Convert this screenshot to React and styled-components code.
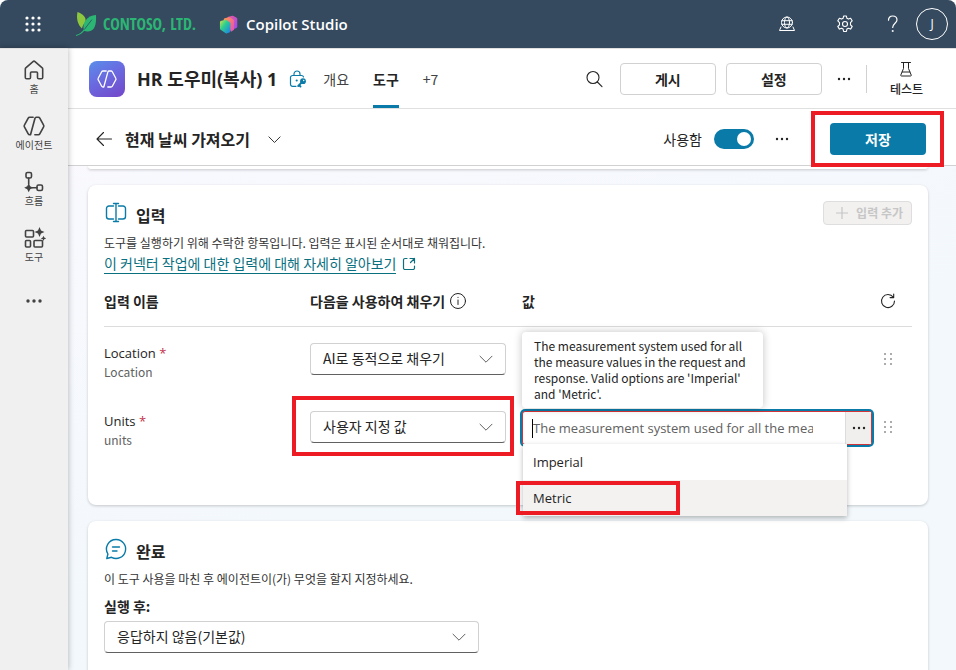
import React from "react";
import styled, { createGlobalStyle, css } from "styled-components";

const sans = '"Open Sans", "Noto Sans CJK KR", sans-serif';

const Global = createGlobalStyle`
  *, *::before, *::after { box-sizing: border-box; }
  html, body, #root { height: 100%; }
  body { margin: 0; background: #fff; color: #242424; font-family: "Noto Sans CJK KR", "Open Sans", sans-serif; font-size: 14px; line-height: 20px; overflow: hidden; }
  button, input, select { font: inherit; color: inherit; }
  h1, h2, p { margin: 0; }
  svg { display: block; flex: none; }
`;

const Shell = styled.div`
  height: 100vh;
  display: flex;
  flex-direction: column;
`;

const TopBar = styled.header`
  height: 48px;
  flex: none;
  display: flex;
  align-items: center;
  background: #354a5f;
  color: #fff;
  border-radius: 8px 8px 0 0;
  padding: 0 8px 0 24px;
`;

const PlainButton = styled.button`
  display: flex;
  align-items: center;
  justify-content: center;
  border: 0;
  background: none;
  padding: 0;
`;

const Brand = styled.a`
  display: flex;
  align-items: center;
  gap: 6px;
  width: 120px;
  margin-left: 33px;
  color: #2bb673;
  text-decoration: none;
  white-space: nowrap;
  font: 700 16px/20px "Open Sans Condensed", "Roboto Condensed", "Liberation Sans Narrow", "Noto Sans CJK KR", sans-serif;
`;

const Product = styled.a`
  display: flex;
  align-items: center;
  gap: 8px;
  margin-left: 24px;
  color: #fff;
  text-decoration: none;
  font: 600 15px/24px ${sans};
`;

const TopActions = styled.div`
  margin-left: auto;
  display: flex;
  align-items: center;
`;

const TopButton = styled(PlainButton)`
  width: ${(p) => p.$width}px;
  height: 48px;
`;

const Avatar = styled(PlainButton)`
  width: 32px;
  height: 32px;
  margin-left: 4px;
  border: 1px solid #fff;
  border-radius: 50%;
  color: #fff;
  font-family: ${sans};
  font-size: 12px;
`;

const Body = styled.div`
  flex: 1;
  min-height: 0;
  display: flex;
`;

const Rail = styled.nav`
  width: 68px;
  flex: none;
  background: #f0f0f0;
  border-top: 1px solid #e0e0e0;
  box-shadow: 0 0 6px rgba(0, 0, 0, 0.3);
  display: flex;
  flex-direction: column;
  align-items: center;
  padding-top: 7px;
  z-index: 1;
`;

const RailLink = styled.a`
  height: 56px;
  display: flex;
  flex-direction: column;
  align-items: center;
  padding-top: 2px;
  color: #424242;
  text-decoration: none;
  font-size: 10px;
  line-height: 14px;
`;

const RailMore = styled(PlainButton)`
  width: 40px;
  height: 42px;
  color: #424242;
`;

const Main = styled.main`
  flex: 1;
  min-width: 0;
  display: flex;
  flex-direction: column;
  background: linear-gradient(160deg, #faf9fe, #f2f8fc 70%);
`;

const AgentBar = styled.div`
  height: 61px;
  flex: none;
  display: flex;
  align-items: center;
  background: #fff;
  border-top: 1px solid #e0e0e0;
  border-bottom: 1px solid #e0e0e0;
  padding: 0 33px 0 21px;
`;

const AgentIcon = styled.div`
  width: 36px;
  height: 36px;
  border-radius: 8px;
  background: linear-gradient(150deg, #5a8eea, #6a6ae0 45%, #7446c8);
  display: flex;
  align-items: center;
  justify-content: center;
  color: #fff;
`;

const AgentName = styled.h1`
  margin: 0 12px;
  font-family: ${sans};
  font-size: 18px;
  line-height: 24px;
  font-weight: 700;
`;

const Tabs = styled.div`
  display: flex;
  align-self: stretch;
  gap: 24px;
  margin-left: 16px;
`;

const Tab = styled.button`
  border: 0;
  border-top: 3px solid transparent;
  border-bottom: 3px solid ${(p) => (p.$active ? "#0a7ba8" : "transparent")};
  background: none;
  padding: 0;
  color: ${(p) => (p.$active ? "#242424" : "#424242")};
  font-weight: ${(p) => (p.$active ? 700 : 400)};
`;

const BarEnd = styled.div`
  margin-left: auto;
  display: flex;
  align-items: center;
`;

const OutlineButton = styled.button`
  width: 96px;
  height: 32px;
  margin-left: 10px;
  border: 1px solid #d1d1d1;
  border-radius: 4px;
  background: #fff;
  padding: 0;
  font-weight: 700;
`;

const IconButton = styled(PlainButton)`
  width: ${(p) => p.$width || 32}px;
  height: 32px;
`;

const Divider = styled.span`
  width: 1px;
  height: 28px;
  background: #d1d1d1;
`;

const TestButton = styled(PlainButton)`
  flex-direction: column;
  gap: 4px;
  margin-left: 23px;
  font-size: 12px;
  line-height: 16px;
  font-weight: 500;
`;

const ToolBar = styled.div`
  height: 57px;
  flex: none;
  display: flex;
  align-items: center;
  background: #fff;
  border-bottom: 1px solid #d1d1d1;
  padding: 4px 30px 0 20px;
`;

const ToolName = styled.h2`
  margin: 0 8px 0 5px;
  font-size: 16px;
  line-height: 24px;
  font-weight: 700;
`;

const SwitchLabel = styled.label`
  display: flex;
  align-items: center;
  gap: 12px;
`;

const Switch = styled.input`
  appearance: none;
  width: 40px;
  height: 20px;
  margin: 0;
  border-radius: 10px;
  background: #0a7ba8;
  display: flex;
  align-items: center;
  justify-content: flex-end;
  padding: 0 3px;
  &::before {
    content: "";
    width: 14px;
    height: 14px;
    border-radius: 50%;
    background: #fff;
  }
`;

const PrimaryButton = styled.button`
  width: 96px;
  height: 32px;
  display: block;
  border: 0;
  border-radius: 4px;
  background: #0a7ba8;
  color: #fff;
  font-weight: 700;
`;

const Marked = styled.div`
  position: relative;
  &::after {
    content: "";
    position: absolute;
    inset: ${(p) => p.$inset};
    border: 4px solid #ed1c24;
    pointer-events: none;
    z-index: 5;
  }
`;

const SaveSlot = styled(Marked)`
  margin-left: 20px;
`;

const Scroller = styled.div`
  flex: 1;
  min-height: 0;
  overflow: hidden;
  padding: 0 28px 0 20px;
`;

const cardLook = css`
  background: #fff;
  box-shadow: 0 1px 3px rgba(0, 0, 0, 0.2);
`;

const CardTail = styled.div`
  height: 3px;
  border-radius: 0 0 8px 8px;
  ${cardLook}
`;

const Card = styled.section`
  ${cardLook}
  margin-top: 16px;
  border-radius: 8px;
  padding: 16px 16px 43px;
`;

const CardHead = styled.div`
  display: flex;
  align-items: flex-start;
  gap: 8px;
  height: 32px;
`;

const CardTitle = styled.h2`
  padding-top: 2px;
  font-size: 16px;
  line-height: 24px;
  font-weight: 700;
`;

const AddButton = styled.button`
  margin-left: auto;
  height: 24px;
  display: flex;
  align-items: center;
  gap: 8px;
  border: 1px solid #dedede;
  border-radius: 4px;
  background: #f2f1f0;
  padding: 0 8px 0 12px;
  font-size: 12px;
  line-height: 16px;
  font-weight: 700;
  &:disabled { color: #c6c6c6; }
`;

const Note = styled.p`
  font-size: 12px;
  line-height: 20px;
  color: #333;
`;

const DocsLink = styled.a`
  display: inline-flex;
  align-items: center;
  gap: 6px;
  color: #0a7080;
  text-decoration: none;
  line-height: 20px;
  & span { border-bottom: 1px solid #0a7080; }
`;

const InputTable = styled.table`
  width: 100%;
  table-layout: fixed;
  border-collapse: collapse;
  margin-top: 5px;
  th { height: 47px; padding: 0 0 2px; text-align: left; font-weight: 700; border-bottom: 1px solid #dcdcdc; vertical-align: middle; }
  td { height: 68px; padding: 0 0 2px; vertical-align: middle; }
`;

const Col = styled.col`
  width: ${(p) => p.$width};
`;

const HeadCell = styled.span`
  display: flex;
  align-items: center;
  gap: 4px;
`;

const ActionSlot = styled.div`
  padding-left: 8px;
`;

const FieldName = styled.div`
  padding-top: 6px;
  font: 400 13px/20px ${sans};
`;

const FieldId = styled.div`
  color: #616161;
  font-size: 12px;
  line-height: 18px;
`;

const Star = styled.span`
  color: #c4314b;
`;

const SelectBox = styled.div`
  position: relative;
  width: ${(p) => p.$width}px;
  max-width: 100%;
  color: #616161;
  & > svg { position: absolute; right: 13px; top: 9px; pointer-events: none; }
`;

const Select = styled.select`
  appearance: none;
  display: block;
  width: 100%;
  height: 32px;
  border: 1px solid #d1d1d1;
  border-bottom-color: #616161;
  border-radius: 4px;
  background: #fff;
  color: #242424;
  padding: 0 32px 2px 12px;
`;

const SelectMark = styled(Marked)`
  width: 196px;
`;

const Combo = styled.div`
  position: relative;
  display: flex;
  height: 34px;
  margin-top: 1px;
  border: 1px solid #d13438;
  border-radius: 3px;
  box-shadow: 0 0 0 2px #0a7ba8;
  background: #fff;
`;

const ComboInput = styled.input`
  flex: 1;
  min-width: 0;
  border: 0;
  outline: 0;
  background: none;
  padding: 1px 32px 0 10px;
  font-family: ${sans};
  font-size: 13px;
  &::placeholder { color: #616161; opacity: 1; }
`;

const Caret = styled.span`
  position: absolute;
  left: 9px;
  top: 7px;
  width: 1px;
  height: 19px;
  background: #000;
`;

const ComboMore = styled(PlainButton)`
  width: 26px;
  background: #f0efee;
  border-left: 1px solid #dcdcdc;
`;

const Tooltip = styled.div`
  position: absolute;
  left: -1px;
  bottom: 36px;
  width: 241px;
  padding: 6px 12px;
  border-radius: 4px;
  background: #fff;
  box-shadow: 0 0 8px rgba(0, 0, 0, 0.24);
  font-size: 12px;
  line-height: 16px;
  z-index: 3;
`;

const Menu = styled.ul`
  position: absolute;
  left: 0;
  right: 24px;
  top: 32px;
  margin: 0;
  padding: 0;
  list-style: none;
  background: #fff;
  box-shadow: 0 2px 5px rgba(0, 0, 0, 0.28);
  z-index: 3;
`;

const Option = styled.li`
  height: 36px;
  padding: 0 10px;
  background: ${(p) => (p.$active ? "#f3f2f1" : "#fff")};
  font: 400 13px/36px ${sans};
`;

const OptionMark = styled(Marked)`
  width: 134px;
`;

const AfterLabel = styled.label`
  display: block;
  padding: 7px 0 5px;
  line-height: 20px;
  font-weight: 700;
`;

const Svg = ({ size = 20, w = 1.2, view = 20, children }) => (
  <svg width={size} height={size} viewBox={`0 0 ${view} ${view}`} fill="none" stroke="currentColor" strokeWidth={w} strokeLinecap="round" strokeLinejoin="round" aria-hidden="true">
    {children}
  </svg>
);

const Dots = ({ r = 1.2, gap = 5 }) => (
  <Svg size={16} view={16}>
    {[8 - gap, 8, 8 + gap].map((x) => <circle key={x} cx={x} cy="8" r={r} fill="currentColor" stroke="none" />)}
  </Svg>
);

const Chevron = ({ size = 14 }) => <Svg size={size} view={14} w={1}><path d="M1 4.2 7 10.2 13 4.2" /></Svg>;

const HexIcon = ({ size = 22, w = 1.5 }) => (
  <Svg size={size} view={22} w={w}>
    <path d="M10.2 3H7a1.5 1.5 0 0 0-1.3.8L2.2 10.2a1.6 1.6 0 0 0 0 1.6l3.5 6.4a1.5 1.5 0 0 0 1.3.8h.8L11.9 3.9A1.3 1.3 0 0 1 13.1 3H15a1.5 1.5 0 0 1 1.3.8l3.5 6.4a1.6 1.6 0 0 1 0 1.6l-3.5 6.4a1.5 1.5 0 0 1-1.3.8h-3.2" />
  </Svg>
);

const Grip = () => (
  <Svg size={16} view={16}>
    {[5, 11].map((x) => [3, 8, 13].map((y) => <circle key={`${x}${y}`} cx={x} cy={y} r="0.8" fill="#424242" stroke="none" />))}
  </Svg>
);

const rail = [
  ["홈", <Svg size={24} view={24} w={1.6}><path d="M3.8 9.8 11 3.6a1.5 1.5 0 0 1 2 0l7.2 6.2c.3.3.5.7.5 1.2v8.5c0 .8-.6 1.3-1.3 1.3h-2.6c-.7 0-1.3-.5-1.3-1.3V15a1 1 0 0 0-1-1h-5a1 1 0 0 0-1 1v4.5c0 .8-.5 1.3-1.2 1.3H4.6c-.7 0-1.3-.5-1.3-1.3V11c0-.5.2-.9.5-1.2Z" /></Svg>],
  ["에이전트", <HexIcon size={24} />],
  ["흐름", <Svg size={24} view={24} w={1.6}><rect x="4" y="2.5" width="5.5" height="5.5" rx="1.5" /><rect x="15" y="15" width="5.5" height="5.5" rx="1.5" /><path d="M6.700 8v6M10 17.700h5" /><path d="m6.700 13.200 1.500 3 3 1.500-3 1.500-1.500 3-1.500-3-3-1.500 3-1.500Z" fill="currentColor" stroke="none" /></Svg>],
  ["도구", <Svg size={24} view={24} w={1.6}><rect x="3.500" y="4.500" width="8" height="6.500" rx="1" /><rect x="3.500" y="14.500" width="5" height="6.500" rx="1" /><rect x="12" y="14.500" width="8.500" height="6.500" rx="1" /><path d="m17.500 1 1.500 3.500L22.500 6 19 7.500 17.500 11 16 7.500 12.500 6 16 4.500ZM21.500 9.700l.8 1.900 1.900.8-1.900.8-.8 1.900-.8-1.900-1.900-.8 1.900-.8Z" fill="currentColor" stroke="none" /></Svg>],
];

const inputs = [
  { name: "Location", id: "Location", fill: "AI로 동적으로 채우기" },
  { name: "Units", id: "units", fill: "사용자 지정 값", editing: true },
];

const FillSelect = ({ label, value, width = 196 }) => (
  <SelectBox $width={width}>
    <Select aria-label={label} defaultValue={value}><option>{value}</option></Select>
    <Chevron />
  </SelectBox>
);

const ValueEditor = () => (
  <Combo>
    <ComboInput aria-label="Units 값" placeholder="The measurement system used for all the measure values" />
    <Caret />
    <ComboMore aria-label="더 보기"><Dots /></ComboMore>
    <Tooltip role="tooltip">The measurement system used for all the measure values in the request and response. Valid options are 'Imperial' and 'Metric'.</Tooltip>
    <Menu role="listbox">
      <Option role="option">Imperial</Option>
      <Option role="option" $active><OptionMark $inset="1px -13px 1px -17px">Metric</OptionMark></Option>
    </Menu>
  </Combo>
);

export default function App() {
  return (
    <>
      <Global />
      <Shell>
        <TopBar>
          <PlainButton aria-label="앱 시작 관리자">
            <svg width="18" height="18" viewBox="0 0 18 18" fill="#fff">
              {[3, 9, 15].map((x) => [3, 9, 15].map((y) => <circle key={`${x}-${y}`} cx={x} cy={y} r="1.6" />))}
            </svg>
          </PlainButton>
          <Brand href="#">
            <svg width="22" height="26" viewBox="0 0 22 26">
              <path d="M2.500 1C8 3 11.500 6 10.500 11c-1.500 1.500-3 3.500-3.500 6.500C3 14 1 8 2.500 1Z" fill="#8dc63f" />
              <path d="M21 4c.5 9-1 16-8 16.500-1.500.1-3-.2-4-.8C6.500 12 12 4.500 21 4Z" fill="#2bb673" />
              <path d="M17 8.500 8.500 19.500" fill="none" stroke="#354a5f" strokeWidth="0.800" />
              <path d="M9.500 18.500C7.500 21.500 5 23.500 1 24.500" fill="none" stroke="#2bb673" strokeWidth="1.200" />
            </svg>
            CONTOSO, LTD.
          </Brand>
          <Product href="#">
            <svg width="19" height="19" viewBox="0 0 20 20">
              <defs>
                <linearGradient id="pa" x1="0" y1="0" x2="1" y2="1"><stop stopColor="#f0589a" /><stop offset="1" stopColor="#9a4bf0" /></linearGradient>
                <linearGradient id="pb" x1="0" y1="0" x2="1" y2="1"><stop stopColor="#ff9d4d" /><stop offset="1" stopColor="#e84ab8" /></linearGradient>
                <linearGradient id="pc" x1="0" y1="0" x2="1" y2="1"><stop stopColor="#e0e04a" /><stop offset="0.400" stopColor="#2fd08c" /><stop offset="1" stopColor="#1a7df0" /></linearGradient>
              </defs>
              <path d="M9 2 14 .8a1.500 1.500 0 0 1 1.300.2l3.200 2a1.500 1.500 0 0 1 .7 1.300v8a1.500 1.500 0 0 1-.9 1.300L14 15.500 9 9Z" fill="url(#pa)" />
              <path d="M5 5.500V4.600c0-.6.400-1.100 1-1.300l4.500-1a1.500 1.500 0 0 1 1.200.2l3.400 2.300c.4.300.700.800.7 1.300v9.500l-3 2Z" fill="url(#pb)" />
              <path d="M1.800 6.200 6.500 5a1.500 1.500 0 0 1 1.300.2l3.500 2.300c.4.300.700.800.7 1.300v8c0 .7-.4 1.200-1 1.500l-2.500 1a1.500 1.500 0 0 1-1.400-.2l-5.400-3.600A1.500 1.500 0 0 1 1 14.200V7.500c0-.6.300-1.100.8-1.300Z" fill="url(#pc)" />
            </svg>
            Copilot Studio
          </Product>
          <TopActions>
            <TopButton $width={58} aria-label="환경">
              <Svg size={18} view={18} w={1}><circle cx="9" cy="7.500" r="5.500" /><ellipse cx="9" cy="7.500" rx="2.500" ry="5.500" /><path d="M3.800 5.700h10.400M3.800 9.300h10.400M3 12 1.500 15.500h15L15 12" /></Svg>
            </TopButton>
            <TopButton $width={58} aria-label="설정">
              <Svg size={20} w={1.1}><circle cx="10" cy="10" r="2.500" /><path d="m8.600 2-.5 2.300-1.500.8-2.200-.8-1.600 2.600 1.700 1.700v2.200l-1.700 1.700 1.600 2.600 2.200-.8 1.500.8.500 2.400h2.800l.5-2.400 1.500-.8 2.200.8 1.600-2.600-1.700-1.700V8.600l1.700-1.700-1.600-2.600-2.200.8-1.500-.8-.5-2.300Z" /></Svg>
            </TopButton>
            <TopButton $width={38} aria-label="도움말">
              <Svg size={20} w={1.2}><path d="M5.500 6.200C5.500 3.500 7.300 2 9.700 2S14 3.600 14 6c0 3-4.300 3.700-4.300 7.500" /><circle cx="9.700" cy="17" r=".4" /></Svg>
            </TopButton>
            <Avatar aria-label="계정">J</Avatar>
          </TopActions>
        </TopBar>
        <Body>
          <Rail>
            {rail.map(([label, icon]) => <RailLink href="#" key={label}>{icon}{label}</RailLink>)}
            <RailMore aria-label="더 보기"><Dots r={1.7} gap={6} /></RailMore>
          </Rail>
          <Main>
            <AgentBar>
              <AgentIcon><HexIcon w={1.3} /></AgentIcon>
              <AgentName>HR 도우미(복사) 1</AgentName>
              <svg width="18" height="18" viewBox="0 0 18 18" fill="none" stroke="#0a7ba8" strokeWidth="1.200" strokeLinecap="round">
                <path d="M7 16.300H3.500a2 2 0 0 1-2-2V7.500a2 2 0 0 1 2-2h9a2 2 0 0 1 2 1.500M5 5.500V4a3 3 0 0 1 6 0v1.500" />
                <circle cx="7.700" cy="10.500" r=".5" />
                <circle cx="14" cy="11.200" r="2.300" fill="#0a7ba8" />
                <path d="m12.500 12.700-3.300 3.300M10.500 15.500l1 1" strokeWidth="1.900" />
                <circle cx="14.700" cy="10.500" r=".7" fill="#fff" stroke="none" />
              </svg>
              <Tabs role="tablist">
                <Tab role="tab">개요</Tab>
                <Tab role="tab" $active>도구</Tab>
                <Tab role="tab">+7</Tab>
              </Tabs>
              <BarEnd>
                <IconButton aria-label="검색"><Svg w={1.1}><circle cx="9" cy="8.500" r="6" /><path d="m13.400 13 4.600 4.600" /></Svg></IconButton>
                <OutlineButton>게시</OutlineButton>
                <OutlineButton>설정</OutlineButton>
                <IconButton $width={44} aria-label="더 보기"><Dots /></IconButton>
                <Divider />
                <TestButton>
                  <Svg size={16} view={16} w={1}><path d="M3.500 1.500h9M5.500 1.500v6L2.800 14c-.2.600 0 1 .7 1h9c.7 0 .9-.4.7-1l-2.700-6.500v-6M4.200 11h7.600" /></Svg>
                  테스트
                </TestButton>
              </BarEnd>
            </AgentBar>
            <ToolBar>
              <IconButton aria-label="뒤로"><Svg size={18} view={18} w={1.1}><path d="M16.500 9H2M8.500 2.500 2 9l6.500 6.500" /></Svg></IconButton>
              <ToolName>현재 날씨 가져오기</ToolName>
              <IconButton aria-label="도구 전환"><Chevron size={13} /></IconButton>
              <BarEnd>
                <SwitchLabel>사용함<Switch type="checkbox" role="switch" defaultChecked /></SwitchLabel>
                <IconButton $width={56} aria-label="더 보기"><Dots /></IconButton>
                <SaveSlot $inset="-12px -18px -12px -19px"><PrimaryButton>저장</PrimaryButton></SaveSlot>
              </BarEnd>
            </ToolBar>
            <Scroller>
              <CardTail />
              <Card>
                <CardHead>
                  <Svg size={24} view={24} w={1.4}><g stroke="#0a7ba8"><path d="M9.500 5H5a2.500 2.500 0 0 0-2.500 2.500v8A2.500 2.500 0 0 0 5 18h4.500M14.500 5H19a2.500 2.500 0 0 1 2.500 2.500v8A2.500 2.500 0 0 1 19 18h-4.500M12 2.500v18M9.500 2.500h5M9.500 20.500h5" /></g></Svg>
                  <CardTitle>입력</CardTitle>
                  <AddButton disabled><Svg size={12} view={12}><path d="M6 0v12M0 6h12" /></Svg>입력 추가</AddButton>
                </CardHead>
                <Note>도구를 실행하기 위해 수락한 항목입니다. 입력은 표시된 순서대로 채워집니다.</Note>
                <DocsLink href="#">
                  <span>이 커넥터 작업에 대한 입력에 대해 자세히 알아보기</span>
                  <Svg size={14} view={14}><path d="M5 1.500H3A1.500 1.500 0 0 0 1.500 3v8A1.500 1.500 0 0 0 3 12.500h8a1.500 1.500 0 0 0 1.500-1.500V9M8 1.500h4.500V6M12.500 1.500 8.500 5.500" /></Svg>
                </DocsLink>
                <InputTable>
                  <colgroup><Col $width="206px" /><Col $width="212px" /><Col $width="auto" /><Col $width="40px" /></colgroup>
                  <thead>
                    <tr>
                      <th>입력 이름</th>
                      <th><HeadCell>다음을 사용하여 채우기<Svg size={18} view={18} w={1}><circle cx="9" cy="9" r="7.500" /><path d="M9 8v4.500M9 5.300v.2" /></Svg></HeadCell></th>
                      <th>값</th>
                      <th><ActionSlot><PlainButton aria-label="새로 고침"><Svg size={16} view={16} w={1.1}><path d="M13.300 4.300A6.500 6.500 0 1 0 14.500 8M13.700 1v3.600h-3.600" /></Svg></PlainButton></ActionSlot></th>
                    </tr>
                  </thead>
                  <tbody>
                    {inputs.map((row) => (
                      <tr key={row.name}>
                        <td><FieldName>{row.name} <Star>*</Star></FieldName><FieldId>{row.id}</FieldId></td>
                        <td>
                          {row.editing
                            ? <SelectMark $inset="-15px -8px -13px -18px"><FillSelect label={row.name} value={row.fill} /></SelectMark>
                            : <FillSelect label={row.name} value={row.fill} />}
                        </td>
                        <td>{row.editing && <ValueEditor />}</td>
                        <td><ActionSlot><PlainButton aria-label={`${row.name} 이동`}><Grip /></PlainButton></ActionSlot></td>
                      </tr>
                    ))}
                  </tbody>
                </InputTable>
              </Card>
              <Card>
                <CardHead>
                  <Svg size={24} view={24} w={1.4}><g stroke="#0a7ba8"><path d="M12 2.500a9.500 9.500 0 1 1-4.500 17.800L2.800 21.500 3.900 17A9.500 9.500 0 0 1 12 2.500ZM8.500 10h7M8.500 14h4.500" /></g></Svg>
                  <CardTitle>완료</CardTitle>
                </CardHead>
                <Note>이 도구 사용을 마친 후 에이전트이(가) 무엇을 할지 지정하세요.</Note>
                <AfterLabel htmlFor="after">실행 후:</AfterLabel>
                <SelectBox $width={375}>
                  <Select id="after" defaultValue="0"><option value="0">응답하지 않음(기본값)</option></Select>
                  <Chevron />
                </SelectBox>
              </Card>
            </Scroller>
          </Main>
        </Body>
      </Shell>
    </>
  );
}
